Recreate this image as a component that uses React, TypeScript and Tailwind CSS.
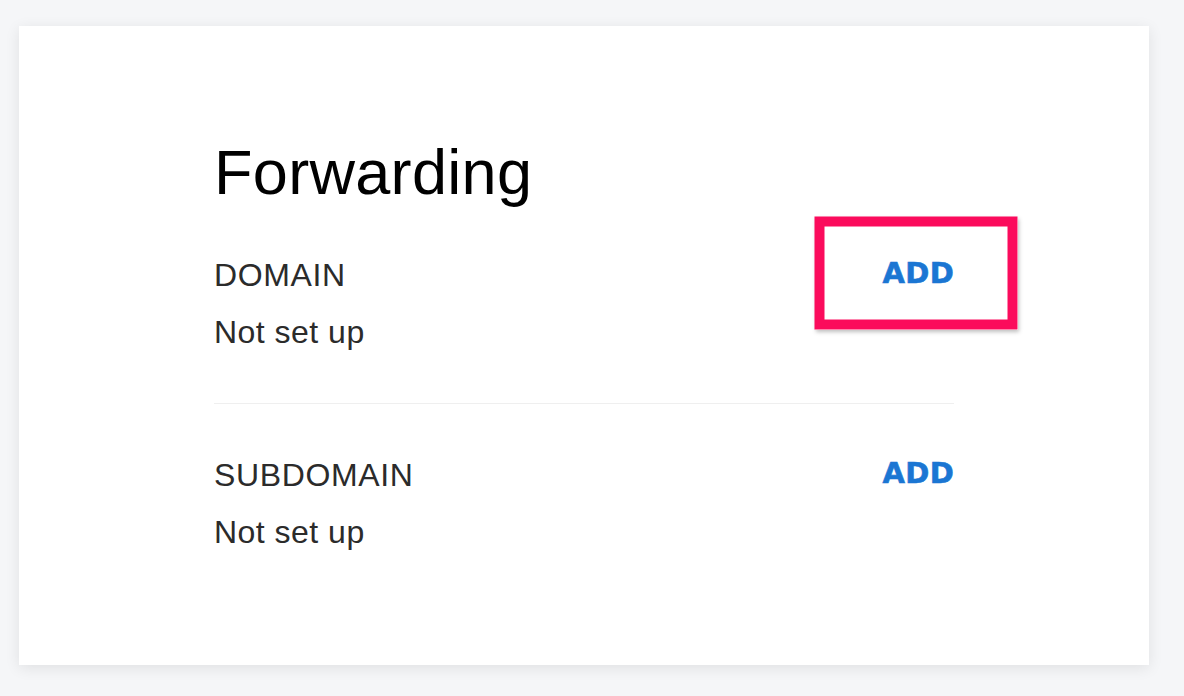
const rows = [
  { label: "DOMAIN", status: "Not set up", highlighted: true },
  { label: "SUBDOMAIN", status: "Not set up", highlighted: false },
];

function ForwardingRow({ label, status, highlighted }: { label: string; status: string; highlighted: boolean }) {
  return (
    <div className="flex items-start justify-between">
      <div>
        <p className="text-[32px] leading-[40px] tracking-[0.02em] text-[#2b2b2b]">{label}</p>
        <p className="mt-[17px] text-[32px] leading-[40px] tracking-[0.015em] text-[#2b2b2b]">{status}</p>
      </div>

      <div className="relative">
        <button
          className="text-[29px] leading-[36px] font-bold tracking-[0.01em] text-[#1b76d3] [-webkit-text-stroke:0.6px_#1b76d3]"
          style={{ fontFamily: '"DejaVu Sans", sans-serif' }}
        >
          ADD
        </button>
        {/* annotation box */}
        {highlighted && (
          <div className="pointer-events-none absolute left-1/2 top-1/2 h-[113px] w-[203px] -translate-x-[calc(50%+2px)] -translate-y-1/2 border-[10px] border-[#fb0b5c] shadow-[1px_2px_4px_rgba(0,0,0,0.25)]" />
        )}
      </div>
    </div>
  );
}

export default function App() {
  return (
    <div
      className="min-h-screen bg-[#f5f6f8] pt-[26px] pl-[19px]"
      style={{ fontFamily: '"Liberation Sans", Arial, sans-serif' }}
    >
      <div className="h-[639px] w-[1130px] bg-white pt-[115px] shadow-[0_3px_14px_rgba(0,0,0,0.09)]">
        <div className="mx-auto w-[740px]">
          <h1 className="text-[63px] leading-none tracking-[0.005em] text-black">Forwarding</h1>

          <div className="mt-[51px]">
            {rows.map((r, i) => (
              <div key={r.label}>
                {i > 0 && <div className="my-[51px] h-px bg-[#efefef]" />}
                <ForwardingRow {...r} />
              </div>
            ))}
          </div>
        </div>
      </div>
    </div>
  );
}
